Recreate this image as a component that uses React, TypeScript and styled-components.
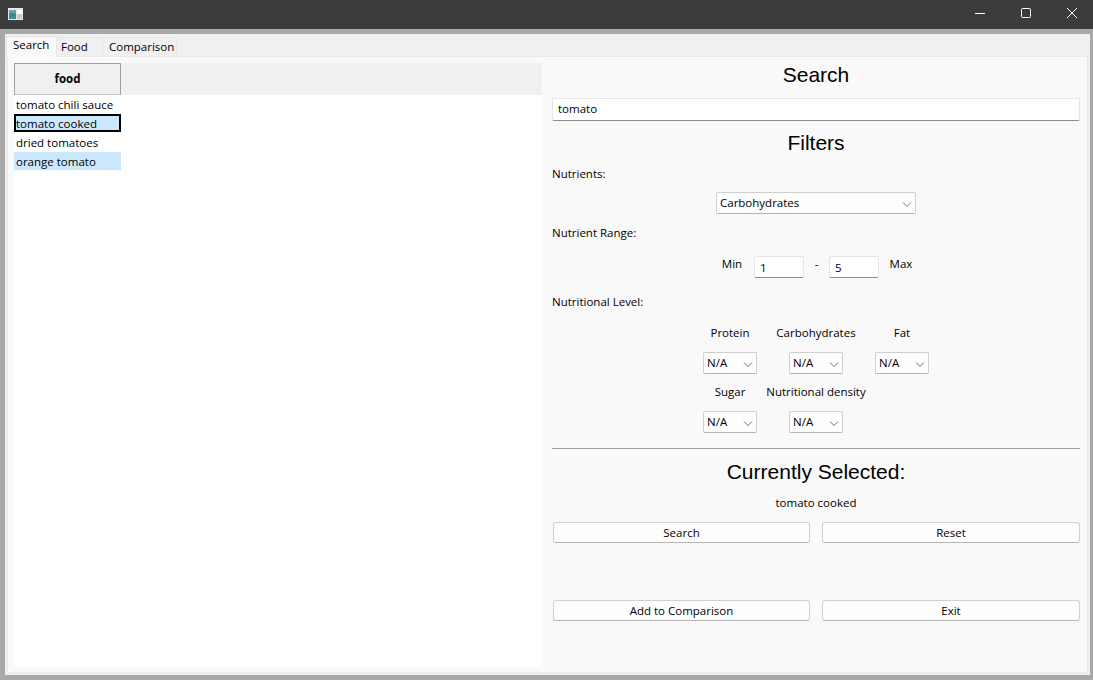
import styled, { createGlobalStyle } from "styled-components";

const GlobalStyle = createGlobalStyle`
    html, body {
        margin: 0;
        padding: 0;
        background: #a8a8a8;
    }
    * {
        box-sizing: border-box;
    }
`

const Shell = styled.div`
    width: 1093px;
    height: 680px;
    display: flex;
    flex-direction: column;
    overflow: hidden;
    font-family: "Open Sans", "Noto Sans", sans-serif;
    font-size: 11.5px;
    color: #000;
`

const TitleBar = styled.div`
    height: 29px;
    flex: none;
    background: #3c3c3c;
    display: flex;
    align-items: center;
    padding-left: 8px;
`

const AppIcon = styled.svg`
    width: 15px;
    height: 12px;
    margin-top: -1px;
`

const WindowButtons = styled.div`
    margin-left: auto;
    margin-right: -2px;
    display: flex;
`

const WindowButton = styled.div`
    width: 46px;
    height: 29px;
    padding-bottom: 3px;
    display: flex;
    align-items: center;
    justify-content: center;
    svg {
        display: block;
    }
`

const Frame = styled.div`
    flex: 1;
    min-height: 0;
    padding: 5px 4px 5px 5px;
    display: flex;
`

const Client = styled.div`
    flex: 1;
    background: #f0f0f0;
    padding: 2px;
    display: flex;
    flex-direction: column;
`

const TabBar = styled.div`
    height: 20px;
    flex: none;
    display: flex;
    align-items: flex-end;
    margin-left: -1px;
`

const Tab = styled.div<{ $active?: boolean; $width: number; $pad: number }>`
    width: ${p => p.$width}px;
    height: ${p => (p.$active ? 21 : 19)}px;
    line-height: ${p => (p.$active ? 15 : 18)}px;
    padding-left: ${p => p.$pad}px;
    background: ${p => (p.$active ? "#f9f9f9" : "#f0f0f0")};
    border: 1px solid #e6e6e6;
    border-bottom: none;
    border-left: ${p => (p.$active ? "1px solid #e6e6e6" : "none")};
    margin-bottom: ${p => (p.$active ? -1 : 0)}px;
    position: relative;
`

const Pane = styled.div`
    flex: 1;
    min-height: 0;
    background: #f9f9f9;
    border: 1px solid #e9e9e9;
    padding: 6px 7px 5px 6px;
    display: grid;
    grid-template-columns: 528px 528px;
    column-gap: 10px;
`

const TableView = styled.div`
    background: #fff;
    display: flex;
    flex-direction: column;
`

const HeaderStrip = styled.div`
    height: 32px;
    background: #f0f0f0;
    flex: none;
`

const HeaderCell = styled.div`
    width: 107px;
    height: 32px;
    padding-bottom: 1px;
    background: #f0f0f0;
    border: 1px solid #a0a0a0;
    border-bottom-color: #c4c4c4;
    font-weight: 700;
    display: flex;
    align-items: center;
    justify-content: center;
`

const Row = styled.div<{ $selected?: boolean; $current?: boolean }>`
    width: 107px;
    height: 18px;
    margin-bottom: 1px;
    line-height: 19px;
    padding-left: 2px;
    background: ${p => (p.$selected ? "#cce8ff" : "#fff")};
    outline: ${p => (p.$current ? "2px solid #000" : "none")};
    outline-offset: -2px;
`

const Form = styled.div`
    display: flex;
    flex-direction: column;
`

const Heading = styled.div<{ $height: number; $pb?: number }>`
    height: ${p => p.$height}px;
    padding-bottom: ${p => p.$pb ?? 0}px;
    display: flex;
    align-items: center;
    justify-content: center;
    font-family: "Liberation Sans", Arial, sans-serif;
    font-size: 21px;
    flex: none;
`

const SearchInput = styled.div`
    height: 23px;
    flex: none;
    background: #fff;
    border: 1px solid #e6e6e6;
    border-bottom: 1px solid #8c8c8c;
    border-radius: 2px;
    padding-left: 5px;
    line-height: 20px;
`

const FieldLabel = styled.div<{ $height: number; $mb: number }>`
    height: ${p => p.$height}px;
    margin-bottom: ${p => p.$mb}px;
    flex: none;
    display: flex;
    align-items: center;
`

const Centered = styled.div<{ $height: number }>`
    height: ${p => p.$height}px;
    flex: none;
    display: flex;
    justify-content: center;
    align-items: flex-start;
`

const ComboBox = styled.div<{ $width: number }>`
    width: ${p => p.$width}px;
    height: 22px;
    flex: none;
    background: #fdfdfd;
    border: 1px solid #d0d0d0;
    border-bottom-color: #b4b4b4;
    border-radius: 2px;
    display: flex;
    align-items: center;
    justify-content: space-between;
    padding: 0 2px 1px 3px;
    svg {
        display: block;
    }
`

const RangeRow = styled.div`
    height: 32px;
    flex: none;
    display: flex;
    justify-content: center;
    padding-left: 1px;
`

const RangeText = styled.div<{ $width: number }>`
    width: ${p => p.$width}px;
    height: 14px;
    display: flex;
    align-items: center;
    justify-content: center;
`

const RangeInput = styled.div`
    width: 50px;
    height: 22px;
    background: #fff;
    border: 1px solid #e6e6e6;
    border-bottom: 1px solid #8c8c8c;
    border-radius: 2px;
    padding-left: 5px;
    line-height: 21px;
`

const LevelGrid = styled.div`
    display: grid;
    grid-template-columns: repeat(3, 86px);
    grid-auto-rows: 59px;
    justify-content: center;
    margin: 3px 0 13px;
    height: 118px;
    flex: none;
`

const LevelCell = styled.div`
    display: flex;
    flex-direction: column;
    align-items: center;
`

const LevelName = styled.div`
    height: 30px;
    margin-bottom: 5px;
    display: flex;
    align-items: center;
    white-space: nowrap;
    flex: none;
`

const Divider = styled.div`
    height: 1px;
    background: #a0a0a0;
    flex: none;
`

const ButtonRow = styled.div<{ $marginTop: number }>`
    display: grid;
    grid-template-columns: 257px 258px;
    column-gap: 12px;
    padding-left: 1px;
    margin-top: ${p => p.$marginTop}px;
`

const PushButton = styled.div`
    height: 21px;
    background: #fdfdfd;
    border: 1px solid #d0d0d0;
    border-bottom-color: #b4b4b4;
    border-radius: 3px;
    display: flex;
    align-items: center;
    justify-content: center;
`

function Chevron() {
    return (
        <svg width="12" height="12" viewBox="0 0 12 12" fill="none">
            <path d="M2 5.5 L6 9.5 L10 5.5" stroke="#707070" strokeWidth="1"/>
        </svg>
    )
}

function Combo({value, width}: { value: string; width: number }) {
    return <ComboBox $width={width}>{value}<Chevron/></ComboBox>
}

const levels = ["Protein", "Carbohydrates", "Fat", "Sugar", "Nutritional density"]
const foods = ["tomato chili sauce", "tomato cooked", "dried tomatoes", "orange tomato"]

export default function App() {
    return (
        <Shell>
            <GlobalStyle/>
            <TitleBar>
                <AppIcon viewBox="0 0 15 12">
                    <rect width="15" height="12" fill="#e8e8e8"/>
                    <rect x="1" y="2" width="7" height="9" fill="#3f8a8a"/>
                    <rect x="1" y="2" width="7" height="3" fill="#6fa0b8"/>
                    <rect x="9" y="2" width="5" height="4" fill="#ffffff"/>
                    <rect x="9" y="6" width="5" height="5" fill="#b8d0d8"/>
                </AppIcon>
                <WindowButtons>
                    <WindowButton>
                        <svg width="10" height="10" viewBox="0 0 10 10"><path d="M0 5.5H10" stroke="#fff"/></svg>
                    </WindowButton>
                    <WindowButton>
                        <svg width="10" height="10" viewBox="0 0 10 10" fill="none">
                            <rect x="0.5" y="0.5" width="9" height="9" rx="1" stroke="#fff"/>
                        </svg>
                    </WindowButton>
                    <WindowButton>
                        <svg width="10" height="10" viewBox="0 0 10 10"><path d="M0 0L10 10M10 0L0 10" stroke="#fff"/></svg>
                    </WindowButton>
                </WindowButtons>
            </TitleBar>
            <Frame>
                <Client>
                    <TabBar>
                        <Tab $active $width={51} $pad={6}>Search</Tab>
                        <Tab $width={46} $pad={4}>Food</Tab>
                        <Tab $width={74} $pad={6}>Comparison</Tab>
                    </TabBar>
                    <Pane>
                        <TableView>
                            <HeaderStrip><HeaderCell>food</HeaderCell></HeaderStrip>
                            {foods.map((food, i) => (
                                <Row key={food} $selected={i === 1 || i === 3} $current={i === 1}>{food}</Row>
                            ))}
                        </TableView>
                        <Form>
                            <Heading $height={35} $pb={11}>Search</Heading>
                            <SearchInput>tomato</SearchInput>
                            <Heading $height={44}>Filters</Heading>
                            <FieldLabel $height={16} $mb={11}>Nutrients:</FieldLabel>
                            <Centered $height={29}><Combo value="Carbohydrates" width={200}/></Centered>
                            <FieldLabel $height={22} $mb={13}>Nutrient Range:</FieldLabel>
                            <RangeRow>
                                <RangeText $width={44}>Min</RangeText>
                                <RangeInput>1</RangeInput>
                                <RangeText $width={25}>-</RangeText>
                                <RangeInput>5</RangeInput>
                                <RangeText $width={44}>Max</RangeText>
                            </RangeRow>
                            <FieldLabel $height={26} $mb={0}>Nutritional Level:</FieldLabel>
                            <LevelGrid>
                                {levels.map(level => (
                                    <LevelCell key={level}>
                                        <LevelName>{level}</LevelName>
                                        <Combo value="N/A" width={54}/>
                                    </LevelCell>
                                ))}
                            </LevelGrid>
                            <Divider/>
                            <Heading $height={46}>Currently Selected:</Heading>
                            <Centered $height={20}>tomato cooked</Centered>
                            <ButtonRow $marginTop={7}>
                                <PushButton>Search</PushButton>
                                <PushButton>Reset</PushButton>
                            </ButtonRow>
                            <ButtonRow $marginTop={57}>
                                <PushButton>Add to Comparison</PushButton>
                                <PushButton>Exit</PushButton>
                            </ButtonRow>
                        </Form>
                    </Pane>
                </Client>
            </Frame>
        </Shell>
    )
}
